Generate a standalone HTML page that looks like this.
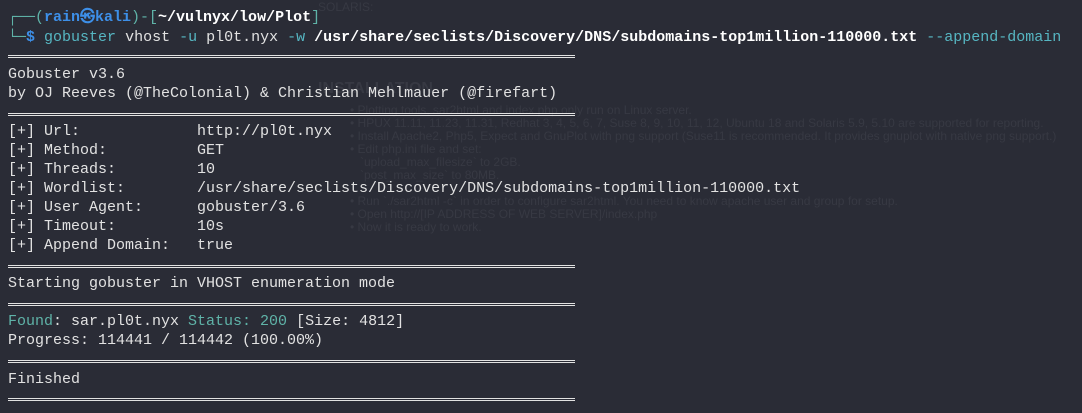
<!DOCTYPE html><html><head><style>
body{margin:0;width:1082px;height:413px;background:#2a2c36;overflow:hidden;position:relative;font-family:"Liberation Mono","DejaVu Sans Mono",monospace;font-size:15px;color:#e2e2e2}
.l{position:absolute;left:8px;white-space:pre;line-height:19px}
.r{position:absolute;left:8px;width:567px;height:1px;border-top:1px solid #e2e2e2;border-bottom:1px solid #e2e2e2;box-sizing:content-box}
.t{color:#5fb3a8}.b{color:#3d8fe8;font-weight:bold}.w{color:#fff;font-weight:bold}.c{color:#56b6c2}
.g{position:absolute;color:#373943;font-family:"Liberation Sans",sans-serif;font-size:12px;white-space:pre}
</style></head><body>
<div class="g" style="left:318px;top:0">SOLARIS:</div>
<div class="g" style="left:318px;top:80px;font-size:16px;font-weight:bold">INSTALLATION</div>
<div class="g" style="left:350px;top:104px;line-height:13px">• Plotting tools, sar2html and index.php only run on Linux server.
• HPUX 11.11, 11.23, 11.31, Redhat 3, 4, 5, 6, 7, Suse 8, 9, 10, 11, 12, Ubuntu 18 and Solaris 5.9, 5.10 are supported for reporting.
• Install Apache2, Php5, Expect and GnuPlot with png support (Suse11 is recommended. It provides gnuplot with native png support.)
• Edit php.ini file and set:
   `upload_max_filesize` to 2GB.
   `post_max_size` to 80MB.

• Run `./sar2html -c` in order to configure sar2html. You need to know apache user and group for setup.
• Open http://[IP ADDRESS OF WEB SERVER]/index.php
• Now it is ready to work.</div>
<div class="l" style="top:8px"><span class="t">┌──(</span><span class="b">rain㉿kali</span><span class="t">)-[</span><span class="w">~/vulnyx/low/Plot</span><span class="t">]</span></div>
<div class="l" style="top:28px"><span class="t">└─</span><span class="b">$</span> <span class="c">gobuster</span> vhost <span class="c">-u</span> pl0t.nyx <span class="c">-w</span> <span class="w">/usr/share/seclists/Discovery/DNS/subdomains-top1million-110000.txt</span> <span class="c">--append-domain</span></div>
<div class="r" style="top:55px"></div>
<div class="l" style="top:65px">Gobuster v3.6
by OJ Reeves (@TheColonial) &amp; Christian Mehlmauer (@firefart)</div>
<div class="r" style="top:113px"></div>
<div class="l" style="top:122px">[+] Url:             http://pl0t.nyx
[+] Method:          GET
[+] Threads:         10
[+] Wordlist:        /usr/share/seclists/Discovery/DNS/subdomains-top1million-110000.txt
[+] User Agent:      gobuster/3.6
[+] Timeout:         10s
[+] Append Domain:   true</div>
<div class="r" style="top:265px"></div>
<div class="l" style="top:274px">Starting gobuster in VHOST enumeration mode</div>
<div class="r" style="top:303px"></div>
<div class="l" style="top:312px"><span class="t">Found</span>: sar.pl0t.nyx <span class="t">Status: 200</span> [Size: 4812]
Progress: 114441 / 114442 (100.00%)</div>
<div class="r" style="top:360px"></div>
<div class="l" style="top:370px">Finished</div>
<div class="r" style="top:398px"></div>
</body></html>
